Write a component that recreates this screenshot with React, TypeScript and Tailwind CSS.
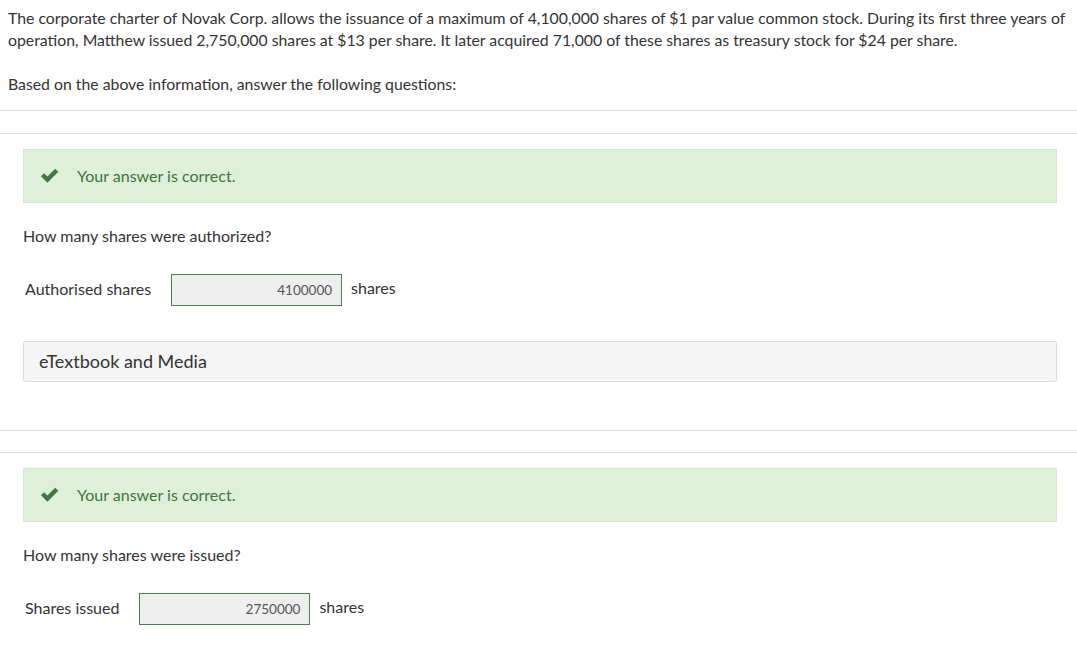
import React from "react";

function Check() {
  return (
    <svg width="20" height="16" viewBox="0 0 20 16" className="shrink-0">
      <path d="M1 8.3 L4.1 5.2 L7.4 8.5 L15.2 0.7 L18.3 3.8 L7.4 14.7 Z" fill="#3d7a3f" />
    </svg>
  );
}

function Correct() {
  return (
    <div className="flex h-[54px] items-center border border-[#d6e9c6] bg-[#dff0d8] pl-[16px]">
      <Check />
      <span className="ml-[17px] text-[16px] leading-[22px] text-[#3c763d]">Your answer is correct.</span>
    </div>
  );
}

function AnswerRow({ label, value }: { label: string; value: string }) {
  return (
    <div className="flex items-center">
      <span className="ml-[2px] mr-[20px] -mt-[2px] text-[16px] leading-[22px] text-[#333]">{label}</span>
      <div className="flex h-[32px] w-[171px] items-center justify-end border border-[#4c7d4c] bg-[#eeeeee] pr-[9px] text-[13.5px] text-[#555]">
        {value}
      </div>
      <span className="ml-[9px] -mt-[4px] text-[16px] leading-[22px] text-[#333]">shares</span>
    </div>
  );
}

export default function App() {
  return (
    <div className="min-h-[647px] w-[1077px] bg-white text-[#333]" style={{ fontFamily: "Lato, 'Open Sans', sans-serif" }}>
      <div className="px-[8px] pt-[7px] text-[15.8px] leading-[22px]">
        <p>
          The corporate charter of Novak Corp. allows the issuance of a maximum of 4,100,000 shares of $1 par value common stock. During its first three years of operation, Matthew issued 2,750,000 shares at $13 per share. It later acquired 71,000 of these shares as treasury stock for $24 per share.
        </p>
        <p className="mt-[22px]">Based on the above information, answer the following questions:</p>
      </div>
      <div className="mt-[15px] h-[23px] border-t border-[#dddddd]" />
      <div className="border-t border-[#dddddd]" />
      <div className="px-[23px] pr-[20px]">
        <div className="mt-[15px]">
          <Correct />
        </div>
        <p className="mt-[22px] text-[16px] leading-[22px]">How many shares were authorized?</p>
        <div className="mt-[27px]">
          <AnswerRow label="Authorised shares" value="4100000" />
        </div>
        <div className="mt-[35px] flex h-[41px] items-center rounded-[2px] border border-[#dddddd] bg-[#f5f5f5] px-[15px] text-[18px] text-[#333]">
          eTextbook and Media
        </div>
      </div>
      <div className="mt-[48px] h-[22px] border-t border-[#dddddd]" />
      <div className="border-t border-[#dddddd]" />
      <div className="px-[23px] pr-[20px]">
        <div className="mt-[15px]">
          <Correct />
        </div>
        <p className="mt-[22px] text-[16px] leading-[22px]">How many shares were issued?</p>
        <div className="mt-[27px]">
          <AnswerRow label="Shares issued" value="2750000" />
        </div>
      </div>
    </div>
  );
}
